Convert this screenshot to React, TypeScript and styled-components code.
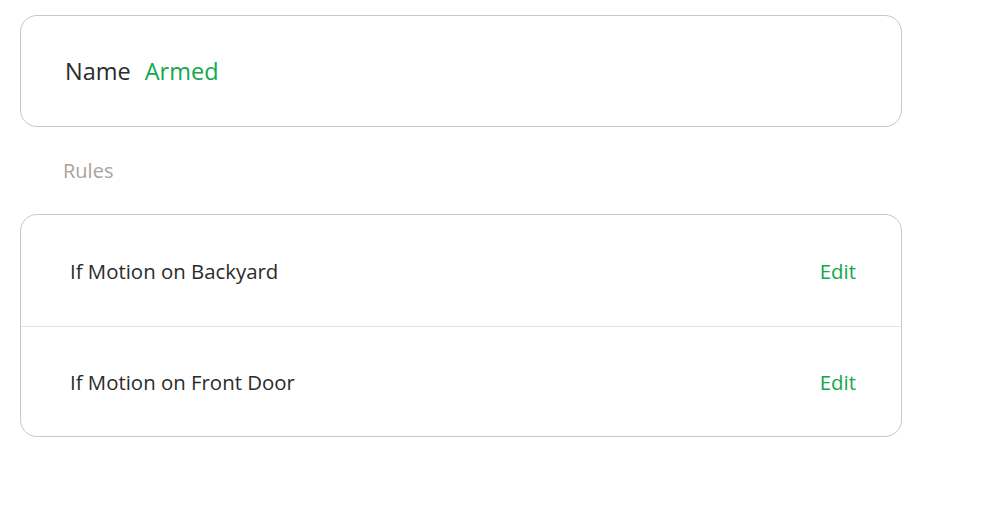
import React from "react";
import styled, { createGlobalStyle } from "styled-components";

const Global = createGlobalStyle`
  body { margin: 0; background: #fff; font-family: "Open Sans", sans-serif; }
`;

const Page = styled.div`
  width: 999px;
  padding: 15px 0 0 20px;
  box-sizing: border-box;
  display: flex;
  flex-direction: column;
`;

const Card = styled.div`
  width: 882px;
  box-sizing: border-box;
  border: 1.5px solid #c8c8c8;
  border-radius: 17px;
  background: #fff;
  overflow: hidden;
`;

const NameRow = styled.div`
  height: 110px;
  display: flex;
  align-items: center;
  padding-left: 44px;
  gap: 14px;
  font-size: 23.5px;
`;

const Label = styled.span`
  color: #2b2b2b;
`;

const Value = styled.span`
  color: #12a84a;
`;

const SectionTitle = styled.div`
  height: 87px;
  display: flex;
  align-items: center;
  padding-left: 43px;
  font-size: 20px;
  color: #a9a39d;
`;

const RuleRow = styled.div<{ $last?: boolean }>`
  height: ${(p) => (p.$last ? "109px" : "112px")};
  display: flex;
  align-items: center;
  justify-content: space-between;
  padding: 0 45px 0 49px;
  font-size: 20.4px;
  border-bottom: ${(p) => (p.$last ? "none" : "1.5px solid #e4e4e4")};
  box-sizing: border-box;
`;

const RuleText = styled.span`
  color: #2b2b2b;
`;

const EditLink = styled.span`
  color: #12a84a;
`;

const rules = ["If Motion on Backyard", "If Motion on Front Door"];

export default function App() {
  return (
    <>
      <Global />
      <Page>
        <Card>
          <NameRow>
            <Label>Name</Label>
            <Value>Armed</Value>
          </NameRow>
        </Card>
        <SectionTitle>Rules</SectionTitle>
        <Card>
          {rules.map((r, i) => (
            <RuleRow key={r} $last={i === rules.length - 1}>
              <RuleText>{r}</RuleText>
              <EditLink>Edit</EditLink>
            </RuleRow>
          ))}
        </Card>
      </Page>
    </>
  );
}
